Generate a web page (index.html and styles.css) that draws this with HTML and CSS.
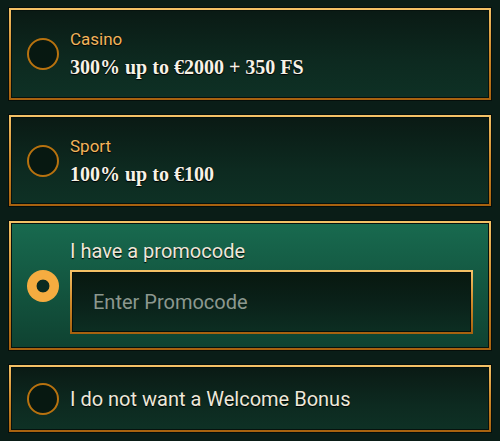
FILE: index.html
```html
<!DOCTYPE html>
<html>
<head>
<meta charset="utf-8">
<link rel="stylesheet" href="styles.css">
</head>
<body>
<div class="list">
  <label class="card card-casino">
    <span class="radio"></span>
    <span class="body">
      <span class="kicker">Casino</span>
      <span class="offer">300% up to €2000 + 350 FS</span>
    </span>
  </label>
  <label class="card card-sport">
    <span class="radio"></span>
    <span class="body">
      <span class="kicker">Sport</span>
      <span class="offer">100% up to €100</span>
    </span>
  </label>
  <label class="card card-promo active">
    <span class="radio checked"></span>
    <span class="body">
      <span class="title">I have a promocode</span>
      <span class="input"><span class="placeholder">Enter Promocode</span></span>
    </span>
  </label>
  <label class="card card-none">
    <span class="radio"></span>
    <span class="body">
      <span class="title">I do not want a Welcome Bonus</span>
    </span>
  </label>
</div>
</body>
</html>
```

FILE: styles.css
```css
html, body {
  margin: 0;
  padding: 0;
}
body {
  width: 500px;
  height: 441px;
  background: #0a1d17;
  font-family: Roboto, "Liberation Sans", sans-serif;
  overflow: hidden;
}
.list {
  display: flex;
  flex-direction: column;
  gap: 15px;
  padding: 8px 9px 0;
}
.card {
  display: flex;
  align-items: center;
  gap: 11px;
  box-sizing: border-box;
  padding: 0 16px;
  border: 2px solid #d59434;
  border-image: linear-gradient(180deg, #f3c166 0%, #d08a2a 50%, #a8620f 100%) 1;
  background: linear-gradient(180deg, #0a1a14 0%, #0d2a20 60%, #0e3125 100%);
  box-shadow: inset 0 0 0 1px #06120e, 0 0 0 1px #050e0b;
}
.card-casino { height: 92px; }
.card-sport { height: 91px; }
.card-promo { height: 129px; }
.card-none { height: 67px; }
.card.active {
  background: linear-gradient(180deg, #186a4f 0%, #145a43 40%, #0f4231 100%);
}
.radio {
  flex: none;
  width: 32px;
  height: 32px;
  box-sizing: border-box;
  border-radius: 50%;
  border: 2px solid #b8720f;
  background: #071811;
}
.radio.checked {
  border: none;
  background: radial-gradient(circle, #0b2a20 0, #0b2a20 6px, #f5ac40 6.8px);
}
.body {
  display: flex;
  flex-direction: column;
  flex: 1;
  min-width: 0;
}
.kicker {
  color: #f2b35a;
  font-size: 17px;
  line-height: 22px;
  text-shadow: 0 1px 1px #000;
}
.offer {
  color: #f6f2e6;
  font-family: "Liberation Serif", serif;
  font-weight: bold;
  font-size: 20px;
  line-height: 26px;
  margin-top: 4px;
  text-shadow: 0 1px 1px #000, 0 0 1px #000;
}
.title {
  color: #ede8da;
  font-size: 20px;
  line-height: 24px;
  text-shadow: 0 1px 1px #000;
}
.card-promo .body {
  gap: 7px;
  padding-top: 2px;
}
.input {
  display: flex;
  align-items: center;
  height: 64px;
  box-sizing: border-box;
  padding: 0 21px;
  border: 2px solid #d59434;
  border-image: linear-gradient(180deg, #f3c166 0%, #d08a2a 50%, #a8620f 100%) 1;
  background: linear-gradient(180deg, #08180f 0%, #0a2119 50%, #0c2e22 100%);
  box-shadow: inset 0 0 0 1px #05100c;
}
.placeholder {
  color: #8c988f;
  font-size: 20px;
}
```
